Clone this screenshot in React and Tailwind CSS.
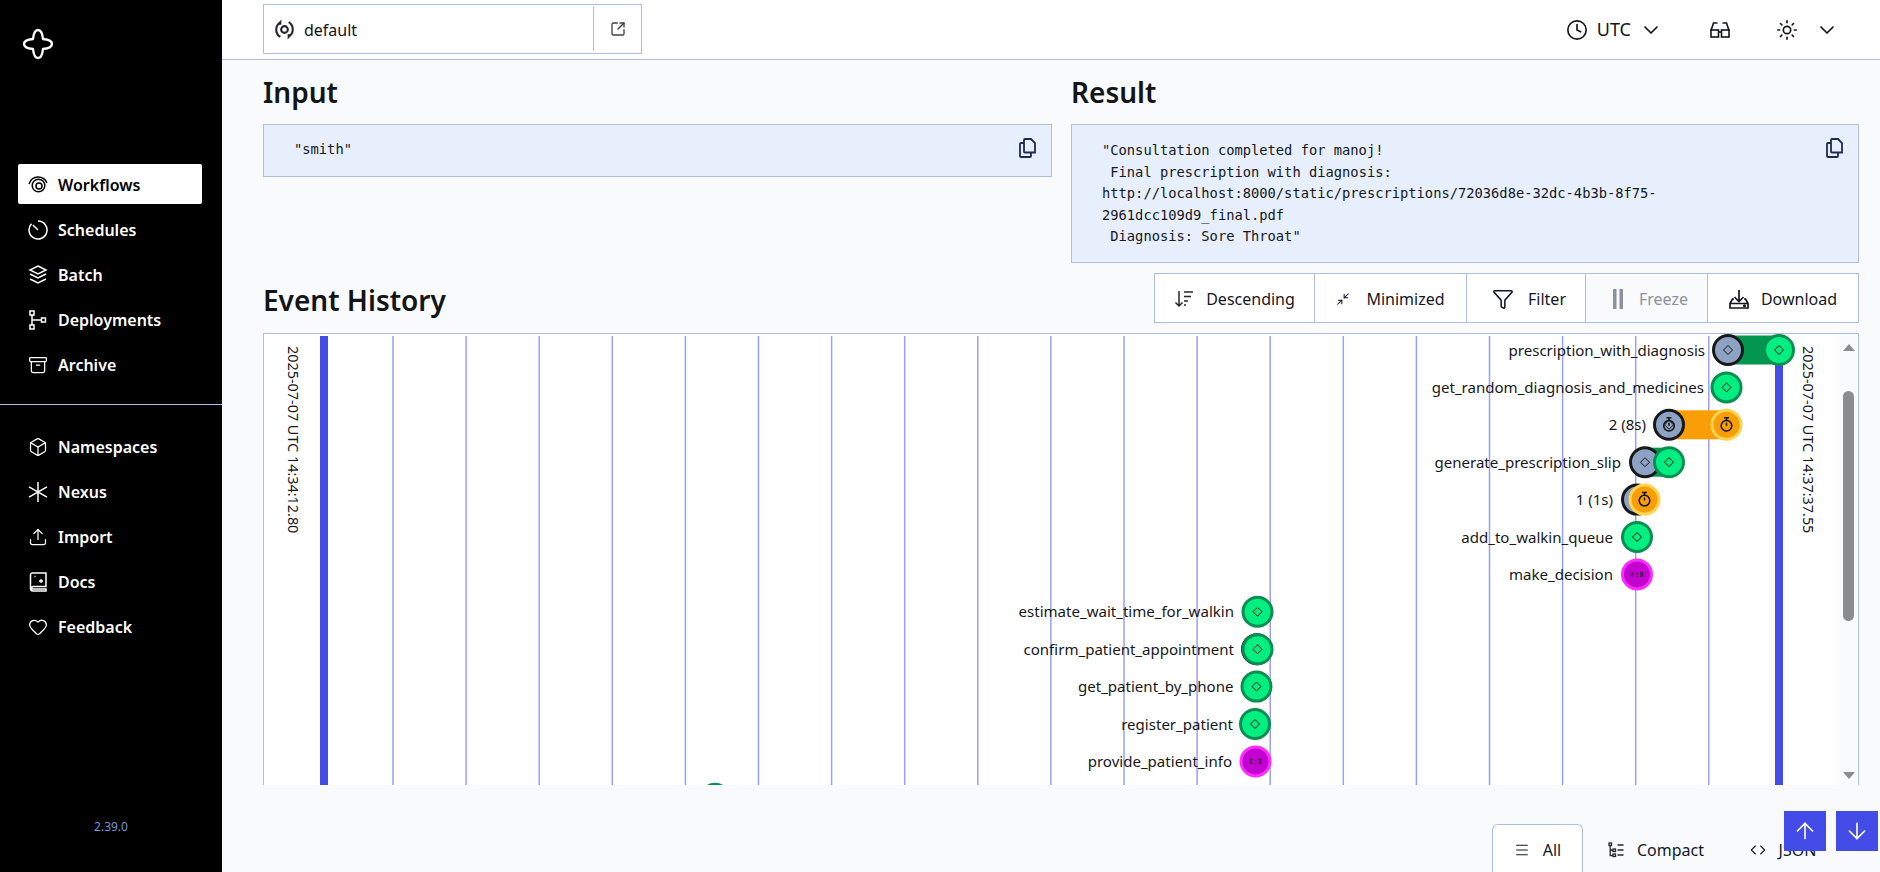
import React from "react";
import { Archive, Box, Upload, Heart, ChevronDown, Clock, Sun, SquareArrowOutUpRight, ArrowUp, ArrowDown, Funnel, Minimize2, Menu, Code } from "lucide-react";

const Logo = () => (
  <svg viewBox="0 0 32 32" className="h-[32px] w-[32px]" fill="none" stroke="white" strokeWidth="2.400" strokeLinejoin="round">
    <path d="M16 2C19 2 20.500 6 21 11C26 11.500 30 13 30 16C30 19 26 20.500 21 21C20.500 26 19 30 16 30C13 30 11.500 26 11 21C6 20.500 2 19 2 16C2 13 6 11.500 11 11C11.500 6 13 2 16 2Z" />
  </svg>
);
const I = ({ children }) => (
  <svg viewBox="0 0 20 20" className="h-5 w-5 shrink-0" fill="none" stroke="currentColor" strokeWidth="1.500">{children}</svg>
);
const WorkflowsIcon = () => (
  <I>
    <circle cx="11" cy="11" r="3" />
    <circle cx="10.500" cy="10.500" r="6.300" />
    <path d="M1 9C2.500 4.500 6 2 10 2s7.500 2.500 9 6" />
  </I>
);
const SchedIcon = () => (
  <I>
    <path d="M10 1a9 9 0 1 1-6.500 2.800" />
    <path d="M5 5l5 5" />
  </I>
);
const BatchIcon = () => (
  <I>
    <path d="M10 1l8 4-8 4-8-4z" />
    <path d="M2 9l8 4 8-4M2 14l8 4 8-4" />
  </I>
);
const DeployIcon = () => (
  <I>
    <rect x="2" y="1" width="4" height="4" />
    <rect x="2" y="15" width="4" height="4" />
    <rect x="13.500" y="8" width="4" height="4" />
    <path d="M4 5v10M4 10h9.500" />
  </I>
);
const NexusIcon = () => (
  <I>
    <path d="M10 0v20M1 4.800l18 10.400M1 15.200l18-10.400" />
  </I>
);
const DocsIcon = () => (
  <I>
    <path d="M18 1H4.500A2 2 0 0 0 2.500 3v13.500A2.500 2.500 0 0 0 5 19h13v-2H5a1 1 0 0 1 0-2.500h13z" />
    <path d="M6.500 4.500h1M11 9h4M13 7v4" strokeWidth="1.300" />
  </I>
);

const nav1 = [
  ["Workflows", <WorkflowsIcon />, true],
  ["Schedules", <SchedIcon />],
  ["Batch", <BatchIcon />],
  ["Deployments", <DeployIcon />],
  ["Archive", <Archive size={20} strokeWidth={1.5} className="shrink-0" />],
];
const nav2 = [
  ["Namespaces", <Box size={20} strokeWidth={1.5} className="shrink-0" />],
  ["Nexus", <NexusIcon />],
  ["Import", <Upload size={20} strokeWidth={1.5} className="shrink-0" />],
  ["Docs", <DocsIcon />],
  ["Feedback", <Heart size={20} strokeWidth={1.5} className="shrink-0" />],
];

const NavItem = ({ label, icon, active }) => (
  <div className={"flex h-10 items-center gap-[10px] rounded-[2px] px-[10px] pt-[2px] text-[16px] font-semibold " + (active ? "bg-white text-black" : "text-white")}>
    {icon}
    <span>{label}</span>
  </div>
);

const Sidebar = () => (
  <aside className="flex h-[872px] w-[222px] shrink-0 flex-col bg-black">
    <div className="h-[164px] pl-[22px] pt-[28px]"><Logo /></div>
    <div className="flex flex-col gap-[5px] pl-[18px] pr-[20px]">
      {nav1.map(([l, i, a]) => <NavItem key={l} label={l} icon={i} active={a} />)}
    </div>
    <div className="mt-[20px] h-px bg-[#aebfdc]" />
    <div className="mt-[21px] flex flex-col gap-[5px] pl-[18px] pr-[20px]">
      {nav2.map(([l, i]) => <NavItem key={l} label={l} icon={i} />)}
    </div>
    <div className="mt-[172px] text-center text-[12px] text-[#7394cf]">2.39.0</div>
  </aside>
);

const GlassesIcon = ({ className }) => (
  <svg viewBox="0 0 20 16" className={"h-[16px] w-[20px] " + className} fill="none" stroke="#121416" strokeWidth="1.600">
    <rect x="1" y="8" width="7.500" height="7" />
    <rect x="11.500" y="8" width="7.500" height="7" />
    <path d="M1 8.500L3.500 1H7.500M19 8.500L16.500 1H12.500M8.500 10h3" />
  </svg>
);

const Header = () => (
  <header className="flex h-[60px] shrink-0 items-center justify-between border-b border-[#aebfdc] bg-white pl-[41px] pr-[41px] text-[#121416]">
    <div className="mb-[1px] flex h-[50px] w-[379px] items-center border border-[#aebfdc] pl-[10px]">
      <svg viewBox="0 0 20 20" className="h-[21px] w-[21px]" fill="none" stroke="#27272a" strokeWidth="2">
        <circle cx="10" cy="10" r="3.200" />
        <path d="M5 4A8 8 0 0 0 6 17" />
        <path d="M15 16A8 8 0 0 0 14 3" />
        <path d="M7 0.500V5.500H2.500zM13 19.500V14.500H17.500z" fill="#27272a" stroke="none" />
      </svg>
      <span className="ml-[9px] flex-1 pt-[2px] text-[16px]">default</span>
      <div className="flex h-[44px] w-[48px] items-center justify-center border-l border-[#aebfdc]">
        <SquareArrowOutUpRight size={16} strokeWidth={2} className="text-[#3f3f46]" />
      </div>
    </div>
    <div className="flex items-center">
      <Clock size={22} strokeWidth={1.8} />
      <span className="ml-[9px] text-[18px]">UTC</span>
      <ChevronDown size={24} strokeWidth={1.7} className="ml-[8px]" />
      <GlassesIcon className="ml-[47px]" />
      <Sun size={22} strokeWidth={1.8} className="ml-[46px]" />
      <ChevronDown size={24} strokeWidth={1.7} className="ml-[17px]" />
    </div>
  </header>
);

const CopyIcon = () => (
  <svg viewBox="0 0 17 20" className="absolute right-[15px] top-[13px] h-[20px] w-[17px]" fill="none" stroke="#1e2a52" strokeWidth="1.800">
    <path d="M6 1h6l4 4v9.500H6a1 1 0 0 1-1-1V2a1 1 0 0 1 1-1Z" />
    <path d="M5 5H2a1 1 0 0 0-1 1v12a1 1 0 0 0 1 1h9a1 1 0 0 0 1-1v-3.500" />
  </svg>
);

const Code_ = ({ children, className }) => (
  <div className={"relative whitespace-pre-wrap border border-[#aebfdc] bg-[#e7eefc] pl-[30px] pr-[31px] text-[13.750px] leading-[21.500px] text-[#141824] " + className} style={{ fontFamily: '"DejaVu Sans Mono", monospace' }}>
    {children}
    <CopyIcon />
  </div>
);

const ToolBtn = ({ w, icon, label, muted, gap = "gap-[12px]" }) => (
  <div className={"flex h-full items-center justify-center border-r border-[#aebfdc] pt-[1px] text-[16px] last:border-r-0 " + gap + " " + w + (muted ? " bg-[#f8fafc] text-[#8b929e]" : " bg-white text-[#141824]")}>
    {icon}
    <span>{label}</span>
  </div>
);

const SortIcon = () => (
  <svg viewBox="0 0 20 20" className="h-5 w-5" fill="none" stroke="#27272a" strokeWidth="1.500">
    <path d="M5 2v15M1.500 13.500L5 17l3.500-3.500" />
    <path d="M10 3h9M10 7.500h7M10 12h4M10 16h2" />
  </svg>
);
const PauseBars = () => (
  <svg viewBox="0 0 10 20" className="h-[20px] w-[10px]" fill="#8b929e">
    <rect x="0" y="0" width="3.500" height="20" />
    <rect x="6.500" y="0" width="3.500" height="20" />
  </svg>
);
const DownloadIcon = () => (
  <svg viewBox="0 0 20 20" className="h-5 w-5" fill="none" stroke="#18181b" strokeWidth="1.700">
    <path d="M10 1v11M5.500 8l4.500 4.500L14.500 8" />
    <path d="M5 10H3.500L1 14.500V19h18v-4.500L16.500 10H15M1 14.500h18" />
    <circle cx="15.500" cy="16.800" r="0.700" fill="#18181b" />
  </svg>
);

const C = { green: ["#00ef80", "#0a8f52"], gray: ["#8ea2c4", "#18181b"], orange: ["#fa9e08", "#fdd34f"], mag: ["#c400d1", "#ff2cff"] };
const Stop = ({ x, y }) => (
  <g fill="none" stroke="#111" strokeWidth="1.500">
    <circle cx={x} cy={y + 1} r="5.300" />
    <path d={`M${x - 2.500} ${y - 7}h5M${x} ${y - 7}v3M${x} ${y + 1}v-3`} />
  </g>
);
const Node = ({ x, y, k }) => (
  <g>
    <circle cx={x} cy={y} r={14.500} fill={C[k][0]} stroke={C[k][1]} strokeWidth="3" />
    {(k === "green" || k === "gray") && (
      <path d={`M${x} ${y - 4.500}l4.500 4.500-4.500 4.500-4.500-4.500z`} fill="none" stroke="#111" strokeWidth="1" />
    )}
    {k === "orange" && <Stop x={x} y={y} />}
    {k === "mag" && (
      <g fill="none" stroke="#111" strokeWidth="0.900">
        <circle cx={x} cy={y - 0.500} r="0.800" fill="#111" stroke="none" />
        <path d={`M${x - 3.500} ${y - 2.500}q-1.300 2.500 0 5M${x - 5.200} ${y - 2.500}q-1.300 2.500 0 5M${x + 3.500} ${y - 2.500}q1.300 2.500 0 5M${x + 5.200} ${y - 2.500}q1.300 2.500 0 5M${x} ${y + 1.500}v1.500`} />
      </g>
    )}
  </g>
);

const rows = [
  { l: "prescription_with_diagnosis", ax: 1705, a: [1728, "gray"], b: [1779, "green"], bar: "#03964f" },
  { l: "get_random_diagnosis_and_medicines", ax: 1704, a: [1726.500, "green"] },
  { l: "2 (8s)", ax: 1646, a: [1669, "gray", 1], b: [1726.500, "orange"], bar: "#fa9e08" },
  { l: "generate_prescription_slip", ax: 1621, a: [1645, "gray"], b: [1669, "green"], bar: "#03964f" },
  { l: "1 (1s)", ax: 1613, a: [1637, "gray"], b: [1644.500, "orange"], bar: "#fa9e08" },
  { l: "add_to_walkin_queue", ax: 1613, a: [1637, "green"] },
  { l: "make_decision", ax: 1613, a: [1637, "mag"] },
  { l: "estimate_wait_time_for_walkin", ax: 1234, a: [1257.500, "green"] },
  { l: "confirm_patient_appointment", ax: 1234, a: [1257, "gray"], b: [1257.500, "green"], bar: "#03964f" },
  { l: "get_patient_by_phone", ax: 1233.500, a: [1256.500, "green"] },
  { l: "register_patient", ax: 1233, a: [1255, "green"] },
  { l: "provide_patient_info", ax: 1232, a: [1255.500, "mag"] },
  { l: "", ax: 700, a: [715, "green"] },
];

const ox = 264, oy = 334;
const Timeline = () => {
  const lines = [];
  for (let k = 0; k < 19; k++) lines.push(393 + k * 73.1);
  return (
    <svg width="1575" height="451" viewBox={`${ox} ${oy} 1575 451`} className="block shrink-0 bg-white">
      {lines.map((x) => (
        <line key={x} x1={x} x2={x} y1="336" y2="785" stroke="#9ca0f5" strokeWidth="1.500" />
      ))}
      <rect x="320" y="336" width="8" height="450" fill="#444ce7" />
      <rect x="1775" y="336" width="8" height="450" fill="#444ce7" />
      <text transform="translate(288 346) rotate(90)" fontSize="14.400" fill="#18181b">2025-07-07 UTC 14:34:12.80</text>
      <text transform="translate(1803 346) rotate(90)" fontSize="14.400" fill="#18181b">2025-07-07 UTC 14:37:37.55</text>
      {rows.map((r, i) => {
        const y = 350 + i * 37.4;
        return (
          <g key={i}>
            {r.b && <rect x={r.a[0]} y={y - 14.500} width={r.b[0] - r.a[0]} height="29" fill={r.bar} />}
            {r.l && <text x={r.ax} y={y + 5.500} textAnchor="end" fontSize="15.050" fill="#18181b">{r.l}</text>}
            <Node x={r.a[0]} y={y} k={r.a[1]} />
            {r.a[2] && <Stop x={r.a[0]} y={y} />}
            {r.b && <Node x={r.b[0]} y={y} k={r.b[1]} />}
          </g>
        );
      })}
    </svg>
  );
};

const Tab = ({ icon, label, active, w }) => (
  <div className={"flex items-center justify-center gap-[13px] pt-[3px] text-[16px] text-[#141824] " + w + (active ? " rounded-t-[6px] border border-b-0 border-[#aebfdc] bg-white" : "")}>
    {icon}
    <span>{label}</span>
  </div>
);

export default function App() {
  return (
    <div className="flex h-[872px] w-[1880px] overflow-hidden bg-[#f8fafc] text-[#141824]" style={{ fontFamily: '"Noto Sans", sans-serif' }}>
      <Sidebar />
      <main className="relative flex min-w-0 flex-1 flex-col">
        <Header />
        <div className="flex flex-col pl-[41px] pr-[21px]">
          <div className="grid grid-cols-[789px_788px] gap-x-[19px]">
            <h2 className="flex h-[64px] items-center text-[28px] font-semibold text-[#121416]">Input</h2>
            <h2 className="flex h-[64px] items-center text-[28px] font-semibold text-[#121416]">Result</h2>
            <Code_ className="h-[53px] self-start pt-[14px]">{'"smith"'}</Code_>
            <Code_ className="h-[139px] pt-[15px]">{'"Consultation completed for manoj!\n Final prescription with diagnosis: http://localhost:8000/static/prescriptions/72036d8e-32dc-4b3b-8f75-2961dcc109d9_final.pdf\n Diagnosis: Sore Throat"'}</Code_>
          </div>
          <div className="mt-[10px] flex h-[50px] items-center justify-between">
            <h2 className="pt-[3px] text-[28px] font-semibold text-[#121416]">Event History</h2>
            <div className="flex h-[50px] border border-[#aebfdc] bg-[#f8fafc]">
              <ToolBtn w="w-[160px]" icon={<SortIcon />} label="Descending" />
              <ToolBtn w="w-[152px]" icon={<Minimize2 size={14} strokeWidth={1.8} className="mr-[4px]" />} label="Minimized" />
              <ToolBtn w="w-[119px]" icon={<Funnel size={22} strokeWidth={1.7} className="ml-[6px] mr-[2px]" />} label="Filter" />
              <ToolBtn w="w-[122px]" muted gap="gap-[16px] pl-[8px]" icon={<PauseBars />} label="Freeze" />
              <ToolBtn w="w-[150px]" icon={<DownloadIcon />} label="Download" />
            </div>
          </div>
          <div className="mt-[10px] flex h-[452px] overflow-hidden border-x border-t border-[#aebfdc]">
            <Timeline />
            <div className="relative flex-1">
              <div className="absolute left-[4px] top-[57px] h-[230px] w-[11px] rounded-full bg-[#8c8c8c]" />
              <div className="absolute left-[4px] top-[10px] h-0 w-0 border-x-[6px] border-b-[7px] border-x-transparent border-b-[#8c8c8c]" />
              <div className="absolute bottom-[6px] left-[4px] h-0 w-0 border-x-[6px] border-t-[7px] border-x-transparent border-t-[#8c8c8c]" />
            </div>
          </div>
          <div className="mt-[39px] flex h-[48px] justify-end pr-[22px]">
            <Tab w="w-[91px]" active icon={<Menu size={16} strokeWidth={1.6} />} label="All" />
            <Tab w="w-[146px]" icon={
              <svg viewBox="0 0 16 16" className="h-4 w-4" fill="none" stroke="#27272a" strokeWidth="1.300">
                <rect x="1" y="1" width="2.500" height="2.500" /><rect x="5" y="7" width="2.500" height="2.500" /><rect x="5" y="12" width="2.500" height="2.500" />
                <path d="M2.200 3.500V13.500H5M2.200 8H5M9.500 3h6M9.500 8h6M9.500 13h6" />
              </svg>
            } label="Compact" />
            <Tab w="w-[108px]" icon={<Code size={16} strokeWidth={1.6} />} label="JSON" />
          </div>
        </div>
        <div className="absolute left-[1562px] top-[811px] flex gap-[10px]">
          <div className="flex h-[40px] w-[42px] items-center justify-center bg-[#444ce7] text-white"><ArrowUp size={26} strokeWidth={1.5} /></div>
          <div className="flex h-[40px] w-[42px] items-center justify-center bg-[#444ce7] text-white"><ArrowDown size={26} strokeWidth={1.5} /></div>
        </div>
      </main>
    </div>
  );
}
